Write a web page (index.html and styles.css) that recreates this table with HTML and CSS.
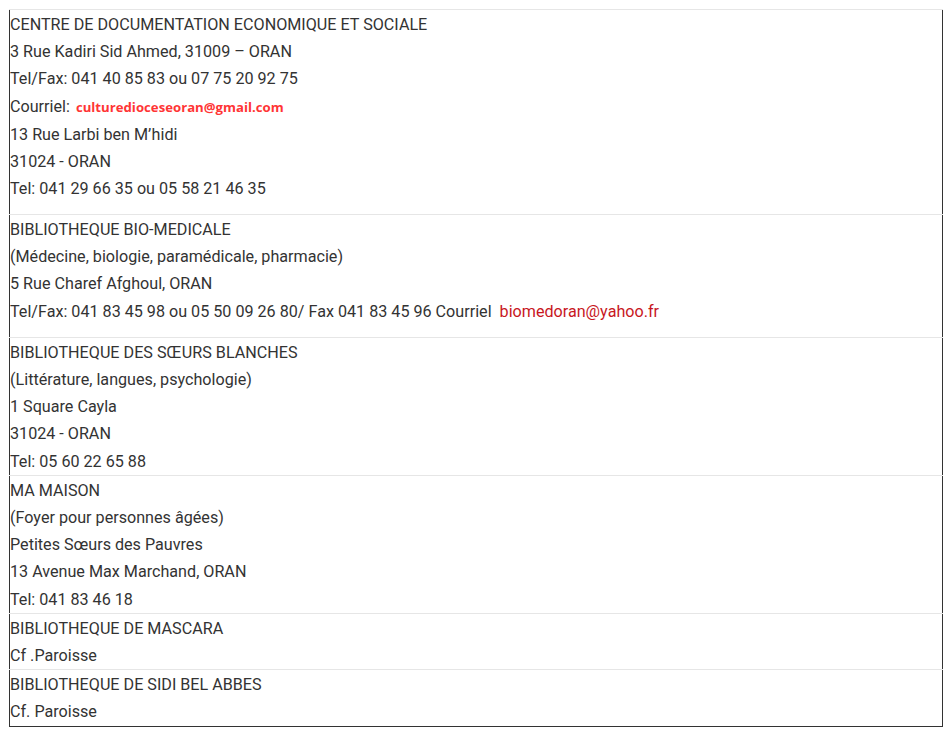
FILE: index.html
```html
<!DOCTYPE html>
<html lang="fr">
<head>
    <meta charset="UTF-8">
    <meta name="viewport" content="width=device-width, initial-scale=1.0">
    <title>Bibliothèques - Oran</title>
    <link rel="stylesheet" href="styles.css">
</head>
<body>
    <table class="libraries">
        <tbody>
            <tr>
                <td class="extra first">
                    CENTRE DE DOCUMENTATION ECONOMIQUE ET SOCIALE<br>
                    3 Rue Kadiri Sid Ahmed, 31009 – ORAN<br>
                    Tel/Fax: 041 40 85 83 ou 07 75 20 92 75<br>
                    Courriel:&nbsp; <a class="mail bold" href="#">culturedioceseoran@gmail.com</a><br>
                    13 Rue Larbi ben M’hidi<br>
                    31024 - ORAN<br>
                    Tel: 041 29 66 35 ou 05 58 21 46 35
                </td>
            </tr>
            <tr>
                <td class="extra">
                    BIBLIOTHEQUE BIO-MEDICALE<br>
                    (Médecine, biologie, paramédicale, pharmacie)<br>
                    5 Rue Charef Afghoul, ORAN<br>
                    Tel/Fax: 041 83 45 98 ou 05 50 09 26 80/ Fax 041 83 45 96 Courriel&nbsp; <a class="mail" href="#">biomedoran@yahoo.fr</a>
                </td>
            </tr>
            <tr>
                <td>
                    BIBLIOTHEQUE DES SŒURS BLANCHES<br>
                    (Littérature, langues, psychologie)<br>
                    1 Square Cayla<br>
                    31024 - ORAN<br>
                    Tel: 05 60 22 65 88
                </td>
            </tr>
            <tr>
                <td>
                    MA MAISON<br>
                    (Foyer pour personnes âgées)<br>
                    Petites Sœurs des Pauvres<br>
                    13 Avenue Max Marchand, ORAN<br>
                    Tel: 041 83 46 18
                </td>
            </tr>
            <tr>
                <td>
                    BIBLIOTHEQUE DE MASCARA<br>
                    Cf .Paroisse
                </td>
            </tr>
            <tr>
                <td>
                    BIBLIOTHEQUE DE SIDI BEL ABBES<br>
                    Cf. Paroisse
                </td>
            </tr>
        </tbody>
    </table>
</body>
</html>
```

FILE: styles.css
```css
body {
    margin: 0;
    padding: 9px 0 0 9px;
    background: #fff;
    font-family: Roboto, 'Liberation Sans', sans-serif;
    color: #333;
}

.libraries {
    width: 934px;
    border-collapse: collapse;
    border-left: 1px solid #333;
    border-right: 1px solid #333;
    border-bottom: 1px solid #333;

    td {
        padding: 1px 0 0;
        border-top: 1px solid #e6e6e6;
        font-size: 16.15px;
        line-height: 27.2px;
        vertical-align: top;
    }

    td.extra {
        padding-bottom: 12px;
    }

    td.first {
        padding-bottom: 11.6px;
    }
}

.mail {
    color: #c8171e;
    text-decoration: none;

    &.bold {
        color: #ff3535;
        font-family: 'Open Sans', sans-serif;
        font-weight: 700;
        font-size: 13.2px;
        margin-left: -2px;
    }
}
```
